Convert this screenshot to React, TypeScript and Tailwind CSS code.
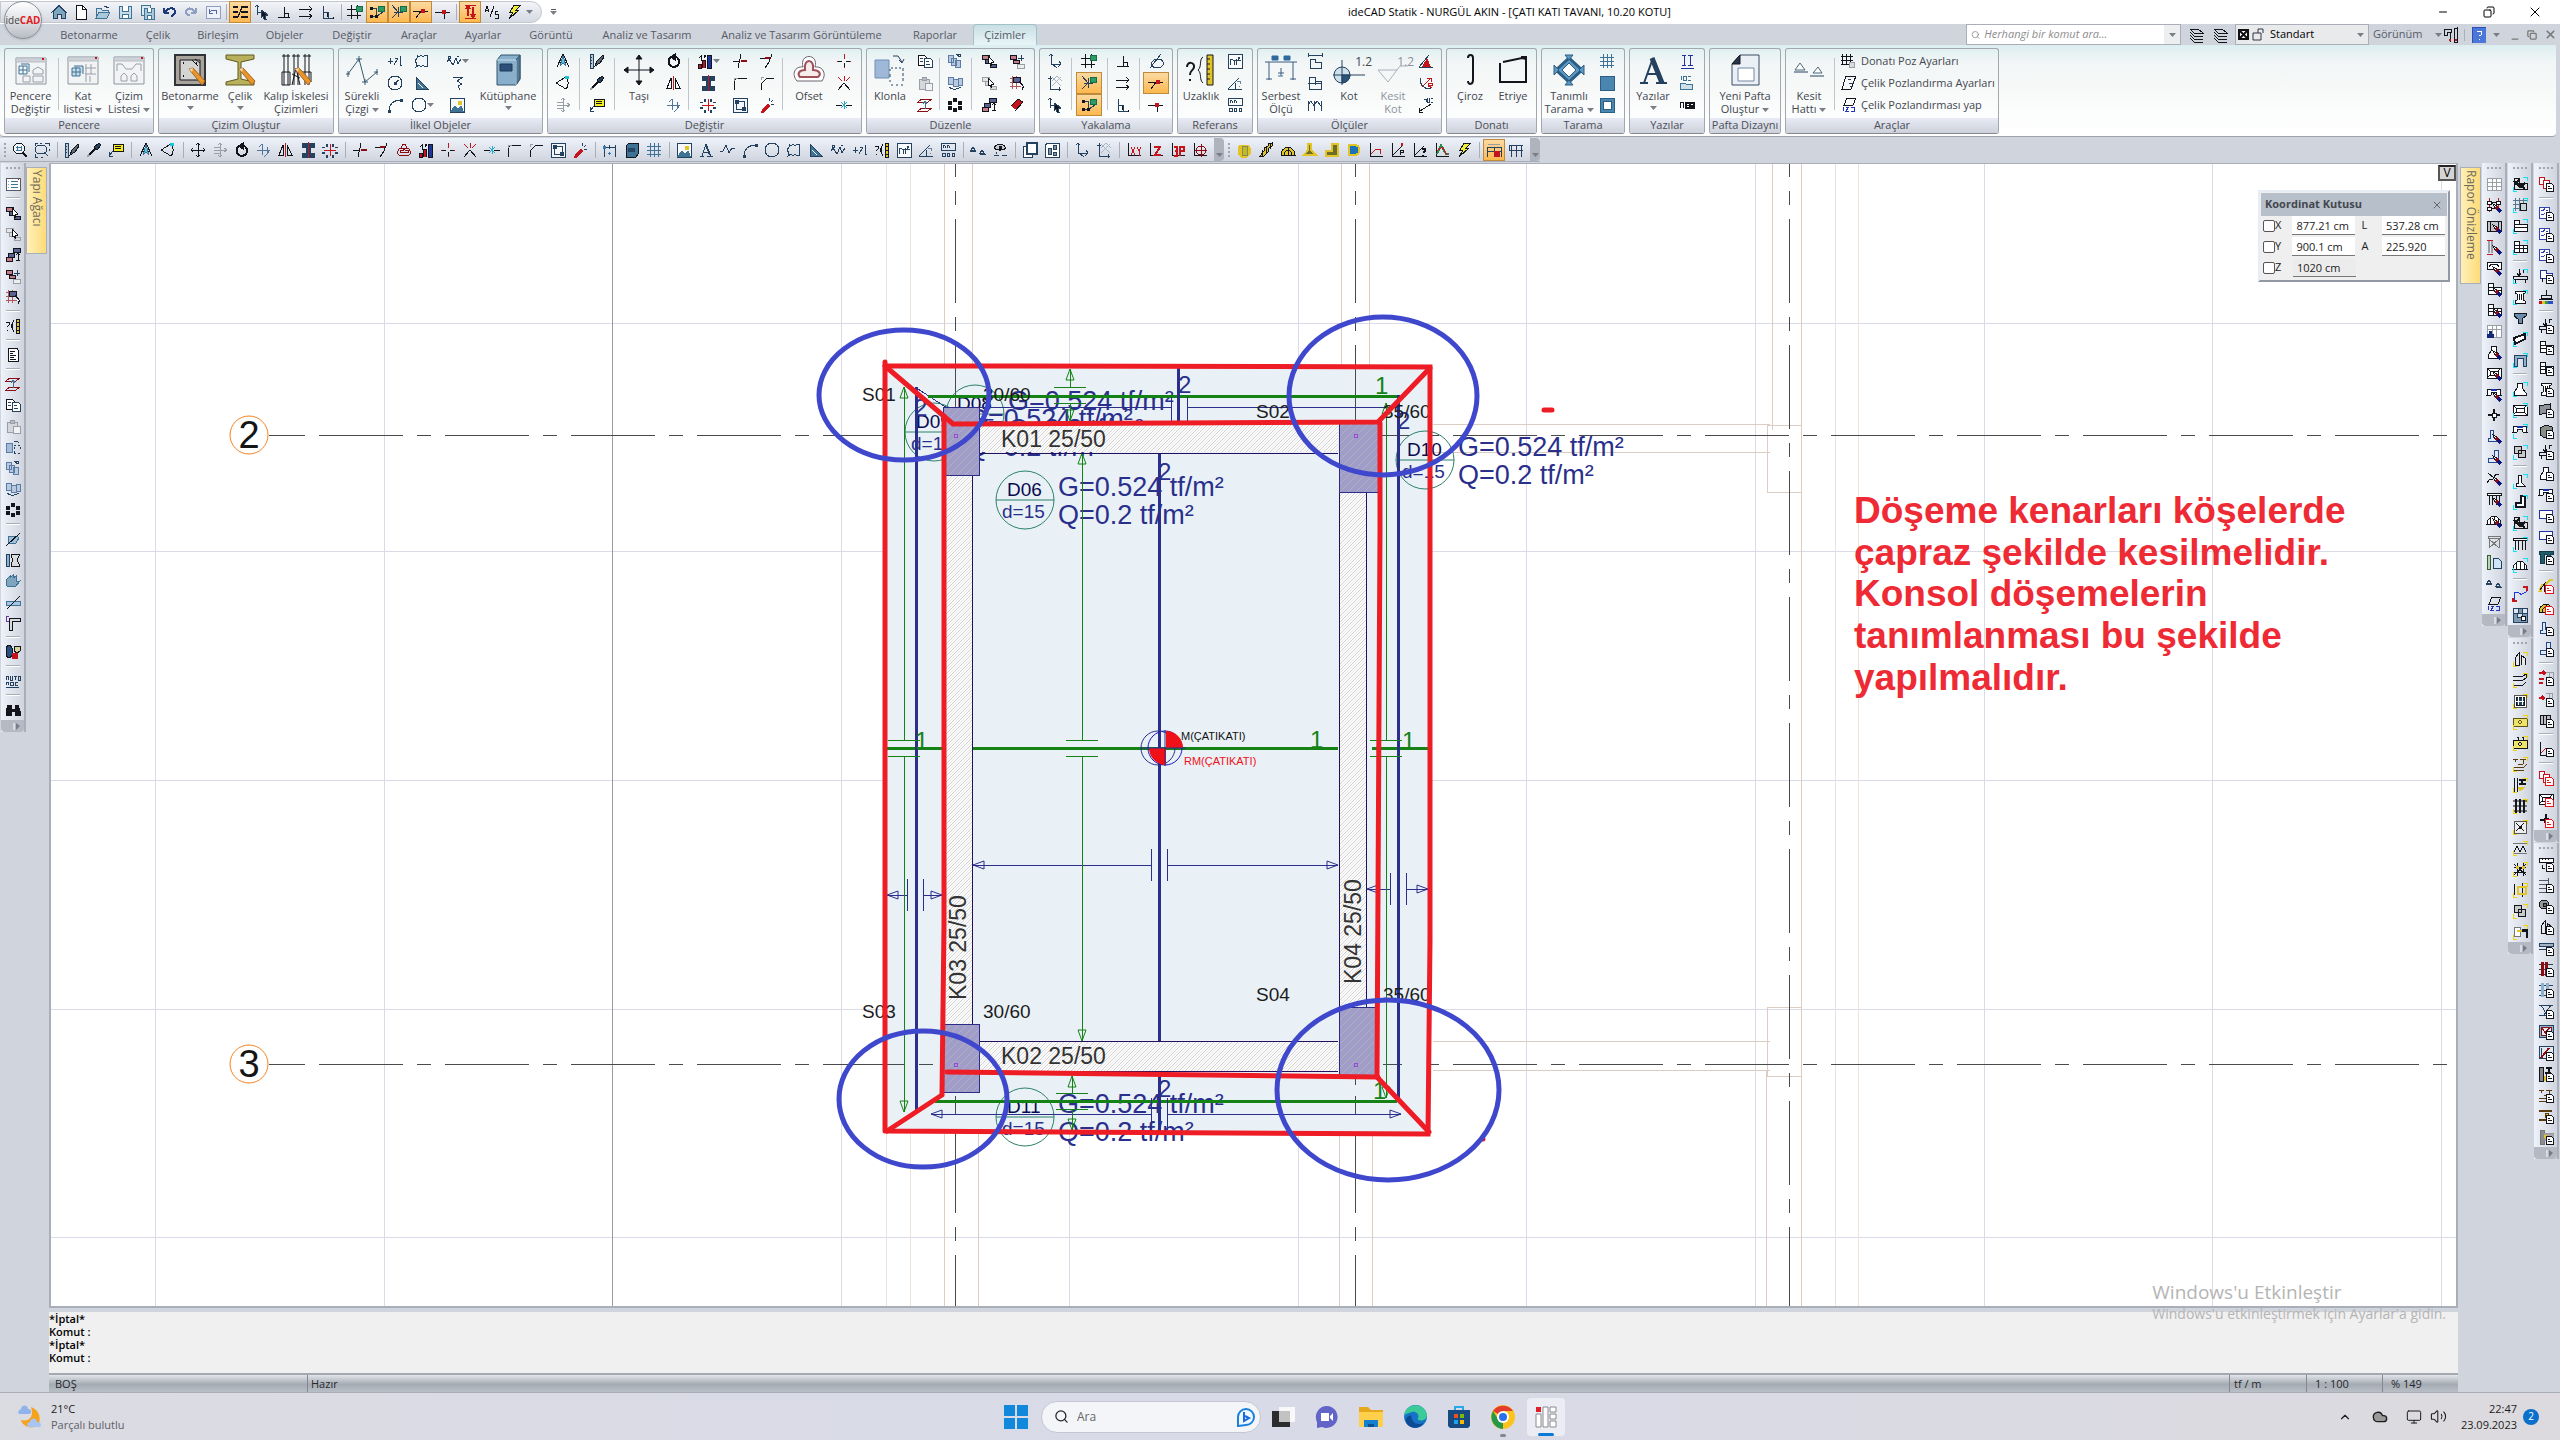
import React from 'react';
import { Search, ChevronUp, Cloud, Monitor, Volume2, Minus, Copy, X } from 'lucide-react';

// one layer of an icon: path, stroke, fill, stroke width
type Layer = [string, string, string?, number?];

const K = '#14141c';
const N = '#24425f';
const R = '#c4141c';
const G = '#9a9ea6';
const B = '#8fb0cc';
const T = '#3f7396';
const Y = '#e0c428';
const M = '#8c0c14';

const ICONS: Record<string, Layer[]> = {
  home: [['M2 8L8 2L14 8V14H10V10H6V14H2Z', N, '#7fa6c0'], ['M0 9L8 1L16 9', N]],
  page: [['M3 1H9L13 5V15H3Z', K, '#fff'], ['M9 1V5H13', K]],
  open: [['M1 14V4H6L7 6H13V8', T, '#cfe0ea'], ['M1 14L4 8H15L12 14Z', T, '#a9c8da'], ['M9 2L14 4', N]],
  save: [['M2 2H14V14H2Z', T, '#c8dce8'], ['M5 2V7H11V2M5 14V10H11V14', T, '#fff']],
  saveAll: [['M2 1H11V11H2Z', T, '#dce8f0'], ['M5 4H15V15H5Z', T, '#a9c8da'], ['M8 15V11H12V15M8 4V8H12V4', T, '#fff']],
  undo: [['M3 9V4M3 9H8M3 9L6 6C9 3 14 4 14 8C14 10 12 12 10 12', '#1d3a7a', undefined, 2]],
  redo: [['M13 9V4M13 9H8M13 9L10 6C7 3 3 5 3 8C3 10 5 11 7 11', '#8f9fc4', undefined, 2]],
  undoBox: [['M1 2H15V14H1Z', '#8f9fc4', '#eef1f8'], ['M4 9V5M4 9H8M4 9L7 6H11V10', '#5168a5']],
  layers: [['M1 3H6M1 8H6M1 13H6', K, undefined, 2], ['M9 3H16M9 8H16M9 13H16', K, undefined, 2], ['M6 13L10 3', K]],
  orthoFree: [['M3 1V11M1 3L3 1L5 3', N], ['M3 8H12', N], ['M7 6L14 11L11 12L12 15L10 15L9 12L7 14Z', N, K]],
  perp: [['M2 13H14M8 13V3M8 9H12V13', K]],
  parallel: [['M1 5H14M11 2L14 5L11 8M1 12H14M11 10L14 12L11 15', K]],
  corner: [['M3 2V14H14M3 8H8V14', N], ['M7 9V13M13 13V15', K]],
  gridLock: [['M0 5H14M0 11H14M4 1V15M10 1V15', K, undefined, 1], ['M9 2H15V7H9Z', '#146e46', '#2e9a66']],
  polyLock: [['M2 4H8L7 12H2M8 12L14 8', N], ['M1 3H3V5H1ZM1 11H3V13H1ZM6 11H8V13H6Z', K, K], ['M9 2H15V7H9Z', '#146e46', '#2e9a66']],
  snapLock: [['M1 1L7 8L1 14M7 3V13M3 8H12', N], ['M9 2H15V7H9Z', '#146e46', '#2e9a66']],
  snapNear: [['M0 7H15M3 14L8 7', K], ['M8 5H11V8H8Z', R, R]],
  snapMid: [['M0 8H15M9 8V15', K], ['M7 6H10V9H7Z', R, R]],
  updown: [['M3 1H14M3 14H14', R], ['M6 3V12M4 5L6 2L8 5M11 3V12M9 10L11 13L13 10', R, undefined, 2]],
  as: [['M1 8L3 2L5 8M2 6H4M6 13L10 2M14 7H11V10H14V14H11', K]],
  bolt: [['M8 1H15L10 6H13L3 15L7 8H4Z', K, '#f0ee30']],
  zoomWin: [['M7 1A5 5 0 1 0 7 12A5 5 0 1 0 7 1Z', K, '#f4f7fa'], ['M4 5H10M4 8H10M5 4V9M9 4V9', T], ['M11 11L15 15', K, undefined, 2]],
  zoomExt: [['M1 4V1H4M6 1H8M11 1H15V4M15 7V9M1 7V10M1 12V15H4M7 15H9', N], ['M7 4A4 4 0 1 0 7 11A4 4 0 1 0 7 4ZM10 10L14 14', N]],
  ruler: [['M1 1H4V15H1ZM1 4H3M1 7H3M1 10H3', N, '#bccbd8'], ['M14 2L8 8L6 13L11 10L15 4Z', K, '#5c6b7a']],
  brush: [['M13 1L15 3L11 8L8 5Z', K, N], ['M9 7L2 14', K, undefined, 2], ['M1 15L3 13', G, undefined, 2]],
  tag: [['M5 2H15V9H5Z', K, '#f4ee22'], ['M7 4H13M7 6H13', K], ['M5 9L2 13M1 10V14H5', N]],
  compass: [['M8 1L2 14M8 1L14 14M4 9H12', K], ['M8 3L5 13L8 10L11 13Z', T, '#56c6dc']],
  cone: [['M1 8L11 2C14 5 14 11 11 14Z', K], ['M10 1H13V3H10Z', '#18c6dc', '#18c6dc']],
  move: [['M8 1V15M1 8H15M6 3L8 1L10 3M6 13L8 15L10 13M3 6L1 8L3 10M13 6L15 8L13 10', K]],
  moveGrey: [['M8 2V14M2 8H15M2 5H9M2 11H9M12 6L15 8L12 10M6 3L8 1L10 3M6 13L8 15L10 13', G]],
  rotate: [['M5 4C2 6 2 11 5 13C8 15 13 13 13 9C13 6 11 4 9 4', K, undefined, 2], ['M9 1V7L5 4Z', K, K]],
  rotCopy: [['M6 2V13M1 8H14M6 2L3 5M11 5V12L8 15M14 8L11 12', '#54759a']],
  mirror: [['M7 1V15', R], ['M5 3V13H1ZM9 3V13H14Z', K]],
  align: [['M2 1H14V5H2ZM2 11H14V15H2Z', N, N], ['M6 5H10V11H6Z', N, N], ['M8 0V16', R, undefined, 1]],
  array: [['M8 2V14M2 8H14', R], ['M4 3H6M10 3H12M1 6V5M14 6V5M1 10V12M14 10V12M4 14H6M10 14H12', N, undefined, 3]],
  trim: [['M1 8H7M9 1L6 15', K], ['M9 8H15', M, undefined, 2]],
  extend: [['M1 5H6M13 1L10 9L6 15', K], ['M6 5H11', M, undefined, 2]],
  offset: [['M6 6C5 1 11 1 10 6C15 6 15 12 13 13H3C1 12 1 6 6 6Z', M], ['M7 8C7 5 9 5 9 8H12V10H4V8Z', M]],
  stairs: [['M1 15V11H4V15ZM5 15V7H8V15', K, R], ['M10 15V2H14V15Z', K, '#20359c'], ['M2 5L4 3V8M7 2H9L7 5', K]],
  burst: [['M8 1V6M8 10V15M1 8H5M11 8H15', R], ['M2 8H6M10 8H14M8 10V14', K]],
  burstX: [['M2 15L8 8L14 15', K], ['M2 2L6 6M14 2L10 6M8 1V6', R]],
  join: [['M0 8H6M10 8H16', K], ['M5 5L11 11M11 5L5 11M8 4V12', '#26a8c8']],
  fillet: [['M2 15V8C2 4 5 3 9 3H15', K], ['M2 3V6M2 3H6', G]],
  chamfer: [['M2 15V9L8 3H15', K], ['M2 2V5M2 2H5', G]],
  stretch: [['M1 1H15V15H1Z', N, '#f2f6fa'], ['M3 3H6V6H3ZM10 10H13V13H10Z', N, N], ['M6 4H12V10M4 6V12H10', N]],
  explode: [['M2 15L9 7L11 9L4 16Z', R, R], ['M10 1L11 4M14 3L12 5M15 7L12 7', N]],
  dims: [['M2 3V15M13 3V15M2 5H13M7 3V7', N], ['M1 4H3V6H1ZM6 11H9M7 10V13', '#3a78b0', '#3a78b0']],
  book: [['M2 4L5 1H14V12L12 15H2Z', K, T], ['M4 6H10V9H4Z', N, '#26486e']],
  hash: [['M4 1V15M8 1V15M12 1V15M1 4H15M1 8H15M1 12H15', T, undefined, 1]],
  image: [['M1 1H15V15H1Z', N, '#f6f8fa'], ['M2 14L6 9L9 12L12 9L14 14Z', T, T], ['M9 4H12V7H9Z', Y, Y]],
  letterA: [['M2 14H6M9 14H15M4 14L8 2L13 14M6 10H11', N, undefined, 1], ['M8 3L12 13', N, undefined, 2]],
  poly: [['M0 9H3L6 3L9 11L12 6L15 7', N]],
  arc: [['M2 14C2 7 7 3 14 3', N], ['M1 13H3V15H1ZM13 2H15V4H13Z', N, N]],
  circle: [['M8 1A7 7 0 1 0 8 15A7 7 0 1 0 8 1Z', N]],
  circleR: [['M8 1A7 7 0 1 0 8 15A7 7 0 1 0 8 1ZM8 8L12 5', N], ['M7 7H9V9H7Z', N, N]],
  cloudRect: [['M3 2L5 4L7 2L9 4L11 2L14 3L13 6L14 8L13 11L14 13L11 14L9 12L7 14L5 12L2 14L3 11L1 8L3 5Z', N]],
  hatchTri: [['M2 2L14 14H2Z', N, T], ['M4 8L9 13', '#fff']],
  spline: [['M1 9L3 6L5 9L7 12L10 5L12 11L15 6', N], ['M2 3H4V5H2ZM11 3H13', N]],
  level: [['M1 8H6M3 5V11M7 12L11 5H8M13 3V12H15', N]],
  query: [['M1 4H4V7L2 9M2 12V13', K], ['M9 2L6 8L9 14M7 5V11', K], ['M11 1H14V15H11Z', K, Y], ['M11 4H14M11 8H14M11 12H14', K]],
  area: [['M1 1H15V15H1Z', N, '#f8fafc'], ['M3 12V7L5 6L7 8V12M7 8L9 7V12M11 4H13L11 7H14', N]],
  angle: [['M1 14L12 3M1 14H15M8 14V8', N], ['M10 6H13V9M12 11V12', '#6b82a0']],
  mm: [['M1 1H15V8H1ZM3 6V3L5 4V6M7 6V3L9 4V6', N], ['M2 11H5V14H2ZM7 11H9V14H7ZM12 11H14V14H12Z', N]],
  kot: [['M0 9H6M10 12H16M1 8L3 5L5 8ZM10 11L12 8L14 11Z', N]],
  eye: [['M2 6C5 1 11 1 14 6C11 9 5 9 2 6Z', K, '#c8ccd2'], ['M7 4H9V7H7Z', K, K], ['M2 13H7M10 13H15M4 10V12', N]],
  pages: [['M1 4H10V15H1Z', N, '#fff'], ['M5 1H15V12H5Z', N, '#fff', 2]],
  sheet: [['M3 1H15V15H1V4Z', N, '#fff'], ['M4 6H7V12H4ZM9 3H12V7H9ZM9 10H12V13H9Z', N, '#8093a8']],
  axes: [['M4 1V11H14M2 3L4 1L6 3M12 8L14 11L11 14M5 11L10 15', N]],
  axesGrid: [['M3 1V14H14', N], ['M5 2L14 11M10 1L15 6M14 2L5 11M5 6L10 1', '#a9b4c4'], ['M1 3H5M12 12V16', N]],
  xy: [['M2 1V13H15', K], ['M5 5L9 13M9 5L5 13M11 5L13 9L15 5M13 9V14', R, undefined, 1]],
  zed: [['M2 1V13H15', K], ['M6 5H12L7 13H13', R, undefined, 2]],
  p3: [['M2 1V13H15', K], ['M4 5H7V14H4M5 9H7M10 14V5H14V9H10', R, undefined, 2]],
  target: [['M2 1V13H15', K], ['M9 4A4 4 0 1 0 9 13A4 4 0 1 0 9 4ZM9 2V15M3 8H15', M]],
  slab: [['M4 3H12L14 6V12L11 15H5L2 12V5Z', Y, Y], ['M6 4H11V13H6Z', '#8c8a50', '#bdbb2a']],
  stair: [['M2 14L6 9V6L10 4V2L14 1V4L10 7V10L6 14Z', K, Y], ['M4 8V14M8 5V11M12 2V7', K]],
  dome: [['M1 13C1 3 15 3 15 13Z', K, Y], ['M4 13C5 7 11 7 12 13M8 6V13', K]],
  found: [['M6 2H9V8L14 13H2L6 8Z', Y, '#6d6c28', 2]],
  ell: [['M8 2H14V14H2V9H8Z', Y, '#6d6c28', 2]],
  dshape: [['M3 3H9C15 4 15 12 9 13H3Z', Y, '#1e72b8', 2]],
  chart: [['M2 1V14H15', K], ['M3 12L8 7H12V12', R]],
  chartP: [['M2 1V14H15M3 13L12 4', K], ['M12 1V4', R, undefined, 2], ['M10 13V8H13V10H10', K]],
  chartQ: [['M2 1V14H15M3 13L12 4', K], ['M10 7H13V9L11 11M11 13V14', K, undefined, 2]],
  chartG: [['M2 1V14H15', K], ['M3 12L7 3L12 12H15', '#2a8850', undefined, 2], ['M3 9L8 5L13 13', R]],
  frameRed: [['M1 15V5H15V15M1 9H15M8 5V9', N], ['M2 2H14', G], ['M8 9H13V14H8Z', R, R]],
  frame: [['M1 3H15M3 3V15M1 8H15M8 3V15M13 3V15M1 3V8', N]],
  pick: [['M1 2H8V6H1Z', K, '#c47c86'], ['M4 6H9V10H4ZM9 11H15V14H9Z', K, '#5a6494'], ['M7 3L13 9L10 10L11 13L9 10L7 11Z', K, '#fff']],
  pickG: [['M1 2H8V6H1Z', G, '#e6e6e8'], ['M4 6H9V10H4ZM9 11H15V14H9Z', G, '#ddd'], ['M7 3L13 9L10 10L11 13L9 10L7 11Z', K, '#fff']],
  pickUp: [['M8 1H15V5H8Z', K, '#5a6494'], ['M1 10H7V14H1Z', K, '#c47c86'], ['M3 6H9V10H3Z', K, '#5a6494'], ['M13 6V14M11 8L13 6L15 8M11 13H15', K]],
  pickPlus: [['M1 2H7V6H1ZM4 7H10V10H4Z', K, '#c47c86'], ['M8 11H15V15H8Z', G, '#eee'], ['M12 2V8M9 5H15', N]],
  pickGrid: [['M1 3H12M1 7H12M1 11H12M3 1V14M7 1V14', '#b0585c'], ['M4 2H11V7H4Z', K, '#5a6494'], ['M10 6L15 12L13 13L14 15', K, '#fff']],
  list: [['M1 2H15V14H1Z', '#555a66', '#fff'], ['M6 5H13M6 8H13M6 11H13', T], ['M3 5H4M3 8H4M3 11H4', B], ['M13 3H14', R]],
  note: [['M3 1H12L13 3V14H3Z', K, '#fff', 1], ['M5 4H10M5 6H8M5 8H11M5 10H9M5 12H11', K]],
  levels: [['M5 2H15L11 5H1ZM5 11H15L11 14H1Z', M], ['M8 12V4M6 7L8 4L10 7', T]],
  copy: [['M1 2H7L9 4V12H1Z', K, '#fff'], ['M7 5H13L15 7V14H7Z', N, '#fff'], ['M3 5H6M3 8H6M9 8H12M9 11H13', N]],
  paste: [['M2 4H12V14H2Z', G, '#d4d8dc'], ['M5 2H9V5H5Z', G, '#b8bcc2'], ['M8 8H15V15H8Z', G, '#f2f2f4']],
  clone: [['M1 4H7V13H1Z', '#5c7ca8', '#a7bcd8'], ['M9 6H11M13 6H15M9 8V10M15 8V10M9 12V14H11M13 14H15', N], ['M9 2H12L14 4', N]],
  clone2: [['M1 2H6V9H1ZM4 5H9V12H4ZM8 7H13V14H8Z', '#5c7ca8', '#b9c9de'], ['M9 1L13 4M11 1H13V4', N]],
  clone3: [['M1 2H6V9H1ZM6 4H11V11H6ZM11 3H15V10H11Z', '#5c7ca8', '#b9c9de'], ['M2 12C5 15 10 15 14 12', N]],
  ring: [['M7 2H9V4H7ZM12 5H14V7H12ZM12 10H14V12H12ZM7 12H9V14H7ZM2 10H4V12H2ZM2 5H4V7H2Z', K, '#8a8a94', 2]],
  cut: [['M3 5H12L14 7L11 12H3Z', T, '#9fc0d8'], ['M1 15L15 2', K]],
  cut2: [['M1 2H4V14H1Z', N, B], ['M6 2H14V4L12 8L14 12V14H6V12L8 8L6 4Z', K, '#d9dcda']],
  roof: [['M1 7L5 3V5L8 2V5L11 3V9L15 8L10 14L2 13Z', T, '#7ea5bd']],
  cut3: [['M1 7H15V11H1Z', T, '#a7c4e0'], ['M2 15L15 2', K]],
  pipe: [['M4 3H15V6H7V15H4Z', K, '#d9d9d9'], ['M4 1A3 3 0 1 0 4 7', '#6a3a9a']],
  shapes: [['M1 4C1 1 7 1 7 4V11C7 14 1 14 1 11Z', K, '#275080'], ['M9 2H15V7L12 9L9 7Z', K, '#d8d49a'], ['M7 9H12V14H7Z', R, R]],
  auto: [['M1 7V3H3V7M5 3V7H7V3M9 3H12M10 3V7M13 3H15V7H13Z', N], ['M1 12V9H3V12M5 12V9H8V12ZM13 9H10V12H13M1 14H14', N]],
  bino: [['M3 3H6V7H10V3H13L15 9V13H10V9H6V13H1V9Z', K, K]],
  tangent: [['M2 15L13 1M9 7A4 4 0 1 0 10 14A4 4 0 1 0 9 7Z', N]],
  pen: [['M1 10L9 2L14 5L6 14Z', K, R], ['M1 10L6 14', '#fff', undefined, 3]],
  zig: [['M4 2H14L8 6L13 9L9 11L11 15', N]],
  dimShape: [['M1 2H15M1 0V4M15 0V4M3 15V6H8V9H14V15Z', N]],
  dimShape2: [['M2 2H8V6H14V14H2Z', N], ['M1 8H15M8 6V10', N]],
  dimWave: [['M1 4V14M7 4V14M14 4V14M1 8L4 4L7 9L10 4L14 9', N]],
  redAngle: [['M1 14H15M1 14L11 2', N], ['M5 13L9 6L12 13Z', R, R]],
  redR: [['M2 3C2 11 7 14 13 14', N], ['M4 12L12 4M9 3H13V7M10 12V8H14V10H10L14 13', R]],
  abcLine: [['M2 14L13 7M1 11V15H5', K], ['M6 2H8V5M9 1V5H11V1M13 1H15M13 5H15', N]],
  fill2: [['M1 1H15V15H1Z', '#2c5d82', '#4b86b0']],
  fillRing: [['M1 1H15V15H1Z', '#2c5d82', '#4b86b0'], ['M4 4H12V12H4Z', '#2c5d82', '#fff']],
  cols: [['M3 2H7M9 2H14M5 2V12M11 2V12M3 12H7M9 12H14M2 15H15', '#2233a0']],
  abcOpen: [['M2 1V5M4 1V5H7V1H4M9 1H12M9 5H12', T], ['M1 14V8H6L7 9H13V14Z', T, '#cfe0ea']],
  abcInv: [['M1 11V5H4V11M6 5H15V11H6Z', K], ['M6 5H15V11H6Z', K, K], ['M8 7H10M12 7H14M8 9H10', '#fff']],
  cog: [['M1 1V12M5 1V12M9 1V9M0 3H12M0 7H12M0 11H8', K], ['M11 9A3 3 0 1 0 11 15A3 3 0 1 0 11 9Z', G, '#ddd']],
  poz: [['M5 1H15L10 14H1Z', K], ['M7 4H10M8 8H13M9 11H12', N]],
  poz2: [['M6 1H15L12 8H3Z', K], ['M2 10V14M5 10H8L5 14H8M10 10H13V14H10', '#2233c0']],
  layerA: [['M2 2H10L15 6H6ZM2 5L6 9H15M2 8L6 12H15M2 11L6 15H15', K]],
  wrench: [['M1 2H8V5H4V8H1ZM7 5V15M11 2L14 1V15H11Z', K], ['M6 13H8M12 13H14', R, undefined, 2]],
  help: [['M2 0H16V16H2Z', '#2c50b8', '#4b78d8'], ['M7 4H11V8L9 9M9 12V13', '#fff', undefined, 1]],
  box: [['M1 2H15V14H1ZM1 6H15M6 2V14M10 2V14M1 10H15', G, '#fff']],
  nodes: [['M3 1V15M12 1V15', R], ['M1 4H5V7H1ZM10 4H14V7H10ZM1 10H5V13H1ZM5 5H10M5 11H9', K, '#fff']],
  wallP: [['M1 3H15V13H1Z', K, '#c4c6ca'], ['M4 3V13M12 3V13', K]],
  colRed: [['M1 1H7M1 15H7', R], ['M3 2V14M6 2V14', G, undefined, 2]],
  beamP: [['M1 2H15V9H1ZM3 7L5 4H11L13 7', K, '#fff']],
  blockL: [['M2 2H7V6H15V13H2ZM2 6H7M2 9H15', K, '#fff']],
  blockG: [['M2 2H7V6H15V13H2ZM2 6H7M2 9H15M7 6V13M11 6V13', K, '#fff']],
  tableN: [['M1 2H15V14H1ZM1 6H15M6 2V14M10 2V14', G, '#fff'], ['M3 8H5V11H7V14H1V11H3Z', '#122a78', '#122a78']],
  pad: [['M5 2H10V7L14 12V14H2V12L5 7Z', K, '#fff']],
  padTop: [['M1 3H15V13H1ZM4 6H12V10H4ZM1 3L4 6M15 3L12 6M1 13L4 10M15 13L12 10', K, '#fff']],
  pads: [['M2 3H14L15 9H11L10 6H6L5 9H1Z', K, '#fff'], ['M5 4H11', '#1a30b0', undefined, 2]],
  plus: [['M8 2V14M2 8H14', K, undefined, 2], ['M6 6H10V10H6Z', K, '#fff']],
  wallR: [['M4 2H7V9L12 13H2V10H4Z', '#23498c', '#dfe8f4']],
  wallK: [['M6 2H9V9L13 13H4V10H6Z', K, '#fff']],
  wallL: [['M8 1H12V13H2V9H8Z', '#23498c', '#dfe8f4']],
  ellK: [['M9 2H13V13H4V9H9Z', K, '#fff', 2]],
  stairs2: [['M1 13L4 9H7L10 4H13M2 3L14 13', K]],
  pile: [['M1 2H15V4H1ZM3 4V14M6 4V14M10 4V14M13 4V14', K, '#fff']],
  arch: [['M1 12C2 2 14 2 15 12ZM4 12V6M8 12V4M12 12V6', K, '#fff']],
  truss: [['M2 3H14V5H2ZM3 5V15M13 5V15M3 6L13 15M13 6L3 15', '#777']],
  doc2: [['M1 1H4V15H1Z', '#3c5c3c', '#b8d8b4'], ['M7 4H12L15 7V14H7Z', N, '#cfe6fa']],
  hatchB: [['M2 2H7V7H15V13H2Z', K, '#ddd'], ['M2 5L9 12M7 7L13 13M2 9L7 4M8 12L13 7', K, undefined, 2]],
  calc: [['M3 1V14M7 1V14M11 1V14M1 3H15M1 7H15M1 11H15', '#5a7488'], ['M8 6H14V13H8Z', K, '#c8d4dc']],
  load: [['M1 8H15V11H1ZM3 11V15M13 11V15M7 1V8M5 5L7 8L9 5M11 1H14M11 1V5', K]],
  col: [['M3 2H13V4L11 5V11L13 12V14H3V12L5 11V5L3 4Z', K, '#fff'], ['M7 5V11M9 5V11', K]],
  cap: [['M2 3H14V6L10 9V13H6V9L2 6Z', K, '#6d8bac']],
  plank: [['M2 7L13 3V8L3 13Z', K, '#fff', 2]],
  portal: [['M2 3H14V14H11V6H5V14H2Z', N, '#8fb0cc', 1]],
  rail: [['M1 3H15V6H1ZM1 9H15', N, '#a8b4c0']],
  curve: [['M2 14V6H6C8 9 10 9 14 6V2', '#2233e0'], ['M1 12V15H5M11 1H15V5', R, undefined, 2]],
  checks: [['M1 1H15V15H1Z', N, '#7e99b0'], ['M1 1H6V6H1ZM10 1H15V6H10ZM5 6H10V10H5Z', N, '#dfe6ee'], ['M9 9H13V13H9Z', K, '#fff']],
  docs: [['M1 1H6V8H1Z', R, '#fff'], ['M5 4H11V12H5Z', R, '#fff']],
  task: [['M1 2H11V13H1Z', '#3344b0', '#fff'], ['M3 5L5 6L7 3M3 9L5 10L7 8M8 5H10', '#3344b0']],
  wallO: [['M2 2H8V5H14V10H2Z', '#2233a0', '#fff'], ['M4 10V14', K]],
  spectrum: [['M3 6H13V9H3ZM8 1V6M1 10H15', K], ['M1 13H4', R, undefined, 3], ['M4 13H7', Y, undefined, 3], ['M7 13H10', '#2a9a50', undefined, 3], ['M10 13H15', '#2a50c0', undefined, 3]],
  tube: [['M1 4L12 2V10L4 12H1Z', K, '#8d9298']],
  cube: [['M2 5L8 2L14 4V12L7 15L2 12Z', K, '#888d88']],
  rect: [['M1 3H14V11H1Z', '#2233a0', '#fff']],
  portalT: [['M1 2H15V5H12V14H9V5H6V14H2V5H1Z', '#0f3c48', '#215a68']],
  yWall: [['M1 14L4 7H7L12 2H15M3 14V8M7 12V6', Y, undefined, 2], ['M2 12L8 4M6 14V6', K]],
  redArr: [['M1 3H7M5 1L7 3L5 5M1 9H6M1 13H5', R, undefined, 2], ['M8 2H15V10M11 2V8', G]],
  redOne: [['M1 7H6M4 5L6 7L4 9', R, undefined, 2], ['M8 2H14V8M11 2V8', G]],
  bars: [['M2 12V3H12V12Z', K, '#bcbcc0'], ['M5 3V12M8 3V12', K]],
  steelA: [['M3 14V7L7 2V14ZM9 14V4L13 7V14', K, '#e8e8e8']],
  steelB: [['M1 4H11L14 2M1 8H11L14 6V2M1 13H11L14 10', K]],
  steelC: [['M2 2H14V14H2Z', '#555', '#fff'], ['M4 4H12V12H4Z', K, N], ['M6 4V12M10 4V12M4 8H12', '#fff']],
  steelD: [['M1 4H15V12H1ZM6 8L8 6L10 8L8 10Z', '#5c5418', '#f0e468']],
  steelE: [['M1 5H15V13H1ZM5 2H7M10 2H12M6 2V5M11 2V5M6 9L8 7L10 9L8 11Z', K, '#f0e468']],
  steelF: [['M1 3H6M8 3H14M3 3V6M11 3V8L6 9M1 11H12L15 8M1 14H12', '#5a3c10']],
  steelG: [['M2 1V15M5 1V15', K], ['M7 3H14M10 3V7M7 7H14', K, undefined, 2], ['M6 10H13L8 14Z', Y, Y]],
  steelH: [['M1 3H15M1 8H15M1 13H15', '#777', undefined, 2], ['M4 1V15M8 1V15M12 1V15', K, undefined, 2]],
  steelI: [['M2 2H14V14H2Z', '#555', '#eee'], ['M4 4L12 12M12 4L4 12M7 7H9V9H7Z', K]],
  steelJ: [['M1 3H15M1 13H15', '#777'], ['M2 12L5 6L8 12L11 6L14 12', K]],
  steelK: [['M2 6H14M2 11H14M5 2V15M11 2V15M2 3L14 14M14 3L2 14', K], ['M4 5H6V7H4ZM10 5H12V7H10Z', Y, Y]],
  steelL: [['M2 2V13M10 1V15', K], ['M6 5H14V12H6Z', Y, undefined, 2]],
  steelM: [['M2 2H9V9H2ZM6 6H13V13H6Z', K, '#c8ccc8']],
  steelN: [['M2 3H8V12H2Z', '#777', '#fff'], ['M5 7H10', Y, undefined, 2], ['M10 6H15V14', K, undefined, 3]],
  scale: [['M1 2H15V6H1ZM4 2V4M7 2V4M10 2V4M4 9V12H7', K, '#fff']],
  linesH: [['M1 3H10M1 7H10M1 11H10M1 15H8M10 1V12', '#555a6a']],
  bolt2: [['M6 2A4 4 0 1 0 6 11A4 4 0 1 0 6 2Z', K, '#989898'], ['M5 5H8V8H5Z', K, '#666']],
  redHash: [['M1 3H15M1 8H15M1 13H12', N], ['M4 1V15M8 1V15', M, undefined, 3]],
  blueHash: [['M1 3H15M1 8H15M1 13H12', N], ['M4 1V15M9 1V15', B, undefined, 3]],
  bowtie: [['M1 2H15M1 12H9M3 2L9 12M13 2L6 12', N]],
  frameB: [['M1 1H15V13H1Z', N, '#8db4cc'], ['M3 3H13V11H3ZM3 3L9 11M13 3L6 9', M, '#e4eef4']],
  frameR: [['M1 1H15V13H1ZM3 3V14', N, '#dfe8ee'], ['M3 13L11 3', M, undefined, 2]],
  steelO: [['M1 1H5V15H1Z', K, '#888'], ['M8 2H14M11 2V7M7 7H13', K, undefined, 2], ['M6 10H9V14H6Z', Y, Y]],
  steelP: [['M1 3H14M1 12H12', '#5a3c10', undefined, 2], ['M7 5H10V9H7Z', '#5a3c10', Y]],
  greyBox: [['M2 1H6V15H2Z', '#777', '#8d8d8d'], ['M6 4H15V11H6Z', '#999', '#a8a8a8'], ['M6 6H8V8H6Z', Y, Y]],
};

const BIG: Record<string, Layer[]> = {
  winSwap: [['M1 4H31V30H1Z', '#8e949c', '#f2f3f5'], ['M1 4H31V8H1Z', '#b8bec6', '#cdd2d8'], ['M27 5H29', R, undefined, 2], ['M4 12H12V20H4ZM6 10H14V18M4 16H12M8 12V20', T], ['M18 16L23 13L28 16V20H18ZM8 22H15V28H8ZM18 22H28V28H18Z', G]],
  kat: [['M1 3H31V30H1Z', '#8e949c', '#f2f3f5'], ['M1 3H31V7H1Z', '#b8bec6', '#cdd2d8'], ['M28 4H30', R, undefined, 2], ['M5 14H13V22H5ZM7 12H16V20M5 18H14M9 13V22', T, '#c8dce8'], ['M19 10V28M24 10V20M18 14H29M18 20H29M23 22V28', G]],
  cizim: [['M1 3H31V30H1Z', '#8e949c', '#f2f3f5'], ['M1 3H31V7H1Z', '#b8bec6', '#cdd2d8'], ['M28 4H30', R, undefined, 2], ['M4 17V10H9L13 15H19L23 10H28V17', G], ['M8 22L11 19L14 22V27H8ZM18 22L21 19L24 22V27H18Z', G]],
  beton: [['M1 1H31V31H1Z', '#303438', '#a8a49c', 2], ['M6 6H26V26H6Z', K, '#d4d4d0'], ['M9 9H10M22 9H23M9 22H10', K, undefined, 2], ['M18 6L24 12M21 5L26 9', K]],
  celik: [['M2 1H30V5L17 8V25L30 28V31H2V28L14 25V8L2 5Z', '#5e5a1c', '#b8b05c']],
  kalip: [['M4 0V31M8 0V31M14 0V31M18 0V31M25 0V31M29 0V31M2 2H10M12 2H20M23 2H31', K], ['M2 18H10V31H2ZM22 18H31V28', K], ['M12 31L16 14L20 31M12 20L20 24', K]],
  zigzag: [['M2 20L13 5L19 28L31 18', '#3a5a70'], ['M10 5H16M13 2V8M16 28H22M19 25V31M0 20H4M2 17V23M28 18H32M31 15V21', '#3a5a70']],
  kutup: [['M5 6L9 1H28V25L24 31H5Z', '#34526a', '#88b0cc'], ['M24 6L28 1V25L24 31Z', '#34526a', '#4f7a98'], ['M8 10H20V17H8Z', '#1d3a58', '#2c5078'], ['M5 6H24V31', '#c8dcea']],
  tasi: [['M16 1V31M1 16H31', K, undefined, 1], ['M13 5L16 1L19 5ZM13 27L16 31L19 27ZM5 13L1 16L5 19ZM27 13L31 16L27 19Z', K, K]],
  ofset: [['M10 13C6 -1 26 -1 22 13C30 12 34 20 29 27H4C-2 20 2 12 10 13Z', '#6c6470', '#fff'], ['M12 16C10 4 22 4 20 16C26 16 29 20 25 23H7C4 20 6 16 12 16Z', '#a05058', '#f7ecec', 2]],
  klonla: [['M1 6H15V24H1Z', '#6f8fb8', '#9fb8d8'], ['M17 14H19M21 14H23M25 14H27M29 14V17M29 19V22M29 24V27M29 31H27M24 31H22M19 31H17M16 28V26M16 23V20M16 17V15', N], ['M19 2H24L28 8M25 6L28 9L30 5', N]],
  uzaklik: [['M2 13C2 7 10 8 9 13C9 16 5 16 5 21M5 25V27', K, undefined, 2], ['M18 3C14 5 17 13 13 16C17 19 14 26 18 29', K], ['M22 1H28V31H22Z', K, Y], ['M22 5H25M22 10H25M22 15H25M22 20H25M22 25H25', K]],
  serbest: [['M4 8V26M16 14V22M28 8V26M0 8H32', '#3a5a80'], ['M7 2H13V6H7ZM19 2H25V6H19Z', '#2e6a9c', '#2e6a9c'], ['M1 25H7M25 25H31M13 19H19', '#3a5a80'], ['M13 22H18', T]],
  kot2: [['M9 13A8 8 0 1 0 9 29A8 8 0 1 0 9 13Z', N, '#cfe0ec'], ['M9 21H17A8 8 0 0 1 9 29Z', N, '#2a5478'], ['M0 21H32M9 6V31', N]],
  kesitKot: [['M1 16H20L11 28ZM20 16L23 12H31', '#a8b0ba']],
  ciroz: [['M14 4C14 0 19 0 19 4V26C19 31 14 31 14 27', K, undefined, 2]],
  etriye: [['M3 9V28H29V5L25 4L6 8', K, undefined, 2], ['M24 3H29V12', K, undefined, 2]],
  tarama: [['M3 16L16 4L29 16L16 28Z', '#2c5d82', '#5c98c4', 3], ['M9 16L16 9L23 16L16 23Z', '#2c5d82', '#fff'], ['M12 1H20L16 6ZM12 31H20L16 26ZM1 11V21L6 16ZM31 11V21L26 16Z', '#2c5d82', '#5c98c4']],
  yazi: [['M3 29H11M19 29H30M7 29L16 4M10 20H21', N, undefined, 2], ['M15 4L25 29', N, undefined, 5]],
  pafta: [['M11 1H30V31H3V10Z', '#3a4c60', '#eaf0f6'], ['M11 1V10H3Z', K, '#24364a'], ['M9 14H25V27H9Z', '#7288a0', '#fff']],
  kesitH: [['M1 18H15M17 22H31', N], ['M2 16L7 9L12 16ZM20 19L25 13L29 19Z', '#4b6878', '#fff']],
};

type IcoProps = { name: string; big?: boolean; deco?: string };

const Ico: React.FC<IcoProps> = ({ name, big, deco }) => {
  const size = big ? 32 : 16;
  const layers = (big ? BIG[name] : ICONS[name]) ?? [];
  return (
    <svg
      width={size}
      height={size}
      viewBox={`0 0 ${size} ${size}`}
      shapeRendering={big ? 'auto' : 'crispEdges'}
      className="shrink-0"
      aria-hidden="true"
    >
      {layers.map(([d, stroke, fill, width], i) => (
        <path key={i} d={d} stroke={stroke} fill={fill ?? 'none'} strokeWidth={width ?? 1} />
      ))}
      {deco === 'cyan' && <path d="M1 11V15H5M11 1H15V5" stroke="#18e0f0" fill="none" />}
      {deco === 'gold' && <path d="M1 11V15H5M11 1H15V5" stroke="#ecd414" fill="none" />}
      {deco === 'brush' && (
        <>
          <path d="M7 7L11 9L11 11L9 11Z" stroke={K} fill="#fff" />
          <path d="M10 10L12 12" stroke={M} strokeWidth="3" />
          <path d="M12 12L15 15" stroke="#0a1480" strokeWidth="3" />
        </>
      )}
      {deco === 'doc' && (
        <>
          <path d="M8 7H13L15 9V15H8Z" stroke={K} fill="#fff" />
          <path d="M10 10H12M10 12H14" stroke={K} />
        </>
      )}
      {deco === 'red' && (
        <>
          <path d="M7 7H13L15 9V15H7Z" stroke="#e8141c" fill="#fff" />
          <path d="M9 10H11M9 12H13" stroke="#e8141c" />
        </>
      )}
      {deco === 'pencil' && (
        <>
          <path d="M15 15L19 14L31 27L28 31Z" fill="#e8962c" stroke="#a8601c" />
          <path d="M15 15L19 14L18 18Z" fill="#f4d8b0" />
        </>
      )}
    </svg>
  );
};

const HOT = 'border border-[#c08a3c] bg-gradient-to-b from-[#fbd9a0] to-[#fdb84c]';

// "-" is a divider, a trailing "*" marks a pressed tool
const ToolRow: React.FC<{ items: string[]; divider: string }> = ({ items, divider }) => (
  <>
    {items.map((item, i) => {
      if (item === '-') {
        return (
          <span key={i} className={`flex h-4 shrink-0 justify-center ${divider}`}>
            <span className="w-px bg-[#a9aeb8]" />
          </span>
        );
      }
      const on = item.endsWith('*');
      const name = item.replace('*', '');
      return (
        <button
          key={i}
          aria-label={name}
          className={`flex h-[22px] w-[22px] shrink-0 items-center justify-center ${on ? HOT : ''}`}
        >
          <Ico name={name} />
        </button>
      );
    })}
  </>
);

const ToolColumn: React.FC<{ items: string[] }> = ({ items }) => (
  <div className="flex w-[25px] flex-col border-r-2 border-[#a9aeb8] bg-gradient-to-r from-[#eef2fa] to-[#cfd4de]">
    <div className="flex h-[10px] items-center justify-center gap-[2px]">
      <span className="size-[2px] bg-[#a0a5b0]" />
      <span className="size-[2px] bg-[#a0a5b0]" />
      <span className="size-[2px] bg-[#a0a5b0]" />
      <span className="size-[2px] bg-[#a0a5b0]" />
    </div>
    {items.map((item, i) => {
      if (item === '-') {
        return (
          <span key={i} className="flex h-2 items-center justify-center">
            <span className="h-[2px] w-[14px] border-b border-white bg-[#a9aeb8]" />
          </span>
        );
      }
      const [name, deco] = item.split(':');
      return (
        <button key={i} aria-label={name} className="flex h-[21px] items-center justify-center">
          <Ico name={name} deco={deco} />
        </button>
      );
    })}
    <div className="flex h-3 items-center justify-end rounded-b bg-[#b4b9c3] pr-1">
      <svg width="7" height="7" viewBox="0 0 7 7" aria-hidden="true">
        <path d="M1 0V7" stroke="#fff" />
        <path d="M3 0L7 3L3 7Z" fill="#777c88" />
      </svg>
    </div>
  </div>
);

const Caret: React.FC = () => (
  <svg width="7" height="4" viewBox="0 0 7 4" className="inline-block shrink-0" aria-hidden="true">
    <path d="M0 0H7L3.5 4Z" fill="#7a7e86" />
  </svg>
);

const Group: React.FC<{ title: string; width: string; children: React.ReactNode }> = ({ title, width, children }) => (
  <section
    className={`flex shrink-0 flex-col overflow-hidden rounded-[3px] border border-[#a3a7ae] border-b-[#85888e] ${width}`}
  >
    <div className="flex flex-1 pt-px">{children}</div>
    <h2 className="flex h-[15px] items-center justify-center bg-gradient-to-b from-[#e8ebf5] to-[#cdd1da] text-[11px] whitespace-nowrap text-[#4b4f58]">
      {title}
    </h2>
  </section>
);

type BigButtonProps = { icon: string; width: string; lines: string[]; caret?: 'line' | 'below'; dim?: boolean; deco?: string; mark?: string };

const BigButton: React.FC<BigButtonProps> = ({ icon, width, lines, caret, dim, deco, mark }) => (
  <button
    className={`relative flex shrink-0 flex-col items-center pt-1 text-[11px] leading-[13px] whitespace-nowrap ${width} ${
      dim ? 'text-[#8d929a]' : 'text-[#43474f]'
    }`}
  >
    <Ico name={icon} big deco={deco} />
    {mark && <span className="absolute top-1 right-0 text-xs">{mark}</span>}
    <span className="h-[3px]" />
    {lines.map((line, i) => (
      <span key={line}>
        {line}
        {caret === 'line' && i === lines.length - 1 && (
          <span className="pl-[3px]">
            <Caret />
          </span>
        )}
      </span>
    ))}
    {caret === 'below' && (
      <span className="flex pt-1">
        <Caret />
      </span>
    )}
  </button>
);

const SmallCol: React.FC<{ items: string[]; width: string }> = ({ items, width }) => (
  <div className={`flex shrink-0 flex-col items-center ${width}`}>
    {items.map((item) => {
      const on = item.endsWith('*');
      const drop = item.endsWith('+');
      const name = item.replace(/[*+]/, '');
      return (
        <button
          key={item}
          aria-label={name}
          className={`flex h-[22px] items-center justify-center ${on ? `w-[26px] ${HOT}` : 'w-[22px]'}`}
        >
          <Ico name={name} />
          {drop && <Caret />}
        </button>
      );
    })}
  </div>
);

const Rule: React.FC = () => (
  <span className="flex w-1 shrink-0 justify-center py-2">
    <span className="w-px bg-[#c0c4cb]" />
  </span>
);

const QUICK = [
  'home', 'page', 'open', 'save', 'saveAll', 'undo', 'redo', 'undoBox', '-',
  'layers*', 'orthoFree', 'perp', 'parallel', 'corner', '-',
  'gridLock', 'polyLock*', 'snapLock*', 'snapNear*', 'snapMid', '-',
  'updown*', 'as', 'bolt',
];

const BAR_ONE = [
  'zoomWin', 'zoomExt', '-', 'ruler', 'brush', 'tag', '-', 'compass', 'cone', '-',
  'move', 'moveGrey', 'rotate', 'rotCopy', 'mirror', 'align', 'array', '-',
  'trim', 'extend', 'offset', 'stairs', 'burst', 'burstX', 'join', 'fillet', 'chamfer', 'stretch', 'explode', '-',
  'dims', 'book', 'hash', '-',
  'image', 'letterA', 'poly', 'arc', 'circle', 'cloudRect', 'hatchTri', 'spline', 'level', 'query', 'area', 'angle', 'mm', '-',
  'kot', 'eye', '-', 'pages', 'sheet', '-', 'axes', 'axesGrid', '-', 'xy', 'zed', 'p3', 'target',
];

const BAR_TWO = ['slab', 'stair', 'dome', 'found', 'ell', 'dshape', 'chart', 'chartP', 'chartQ', 'chartG', 'bolt', '-', 'frameRed*', 'frame'];

const LEFT = [
  'list', '-', 'pick', 'pickG', 'pickUp', 'pickPlus', 'pickGrid', '-', 'query', '-', 'note', '-',
  'levels', 'copy', 'paste', 'clone', 'clone2', 'clone3', 'ring', '-',
  'cut', 'cut2', 'roof', 'cut3', 'pipe', '-', 'shapes', '-', 'auto', '-', 'bino',
];

const RIGHT_A = [
  'box', 'nodes:brush', 'wallP:brush', 'colRed:brush', 'beamP:brush', 'blockL:brush', 'blockG:brush', 'tableN',
  'pad:brush', 'padTop:brush', 'pads:brush', 'plus', 'wallR:brush', 'wallL:brush', 'stairs2:brush', 'pile:brush',
  'arch:brush', 'truss', 'doc2', 'kot', 'poz2',
];

const RIGHT_B = [
  'hatchB:cyan', 'calc:cyan', 'blockL:cyan', 'blockG:cyan', '-', 'load:cyan', 'col:cyan', 'cap', 'plank:cyan', 'portal:cyan', '-',
  'pad:cyan', 'padTop:cyan', 'pads:cyan', 'steelM:cyan', '-', 'wallK:cyan', 'ellK:cyan', 'hatchB:cyan', 'pile:cyan', 'arch:cyan', '-',
  'curve', 'checks',
];

const RIGHT_C = [
  'steelA:gold', 'steelB:gold', 'steelC:gold', 'steelD:gold', 'steelE:gold', 'steelF:gold', 'steelG:gold', 'steelH:gold',
  'steelI:gold', 'steelJ:gold', 'steelK:gold', 'steelL:gold', 'steelM:gold', 'steelN:gold',
];

const RIGHT_D = [
  'docs:doc', '-', 'task:doc', 'task:doc', 'task:doc', 'wallO:doc', 'spectrum', '-',
  'load:doc', 'blockL:doc', 'blockG:doc', 'col:doc', 'tube:doc', 'cube:doc', 'load:doc', 'pad:doc', 'pads:doc', 'rect:doc', 'rect:doc', 'portalT:doc', '-',
  'yWall:red', 'dome:red', 'wallR:doc', 'wallL:doc', '-', 'redArr:doc', 'redOne:doc', 'bars:doc', '-', 'chart:doc', '-',
  'docs:red', 'padTop:red', 'plus:red',
];

const RIGHT_E = [
  'scale:doc', 'linesH:doc', 'bolt2:doc', 'steelA:doc', 'rail:doc', 'redHash:doc', 'blueHash:doc', 'bowtie:doc', 'frameB:doc',
  'frameR:doc', 'steelO:doc', 'steelF:doc', 'steelP:doc', 'greyBox:doc',
];

const TABS: [string, string][] = [
  ['Betonarme', 'w-[84px]'],
  ['Çelik', 'w-[54px]'],
  ['Birleşim', 'w-[66px]'],
  ['Objeler', 'w-[67px]'],
  ['Değiştir', 'w-[68px]'],
  ['Araçlar', 'w-[66px]'],
  ['Ayarlar', 'w-[62px]'],
  ['Görüntü', 'w-[74px]'],
  ['Analiz ve Tasarım', 'w-[118px]'],
  ['Analiz ve Tasarım Görüntüleme', 'w-[191px]'],
  ['Raporlar', 'w-[76px]'],
];

const TitleBar: React.FC = () => (
  <header className="flex h-6 items-center bg-white">
    <div className="flex h-[22px] items-center rounded-r-full border border-[#c3c8d0] bg-gradient-to-b from-[#f2f4f8] to-[#d5d9e1] pr-2 pl-[47px]">
      <ToolRow items={QUICK} divider="w-[5px]" />
      <button aria-label="Daha fazla" className="ml-px flex">
        <Caret />
      </button>
    </div>
    <div className="ml-2 flex flex-col items-center gap-px">
      <span className="h-px w-[5px] bg-[#555]" />
      <Caret />
    </div>
    <h1 className="flex-1 pl-[42px] text-center text-[11px] whitespace-nowrap text-black">
      ideCAD Statik - NURGÜL AKIN - [ÇATI KATI TAVANI, 10.20 KOTU]
    </h1>
    <div className="flex items-center pr-[2px] text-black">
      <button aria-label="Küçült" className="flex w-[46px] justify-center">
        <Minus className="h-3 w-3" strokeWidth={2} />
      </button>
      <button aria-label="Önceki boyut" className="flex w-[46px] justify-center">
        <Copy className="h-3 w-3 -scale-x-100" strokeWidth={2} />
      </button>
      <button aria-label="Kapat" className="flex w-[46px] justify-center">
        <X className="h-4 w-4" strokeWidth={1.5} />
      </button>
    </div>
  </header>
);

const TabRow: React.FC = () => (
  <nav className="flex h-[21px] items-end pl-[47px] text-[11px] text-[#565b65]">
    {TABS.map(([name, width]) => (
      <button key={name} className={`h-full shrink-0 pt-[2px] whitespace-nowrap ${width}`}>
        {name}
      </button>
    ))}
    <button className="h-full w-16 shrink-0 rounded-t border border-b-0 border-[#9fc3c8] bg-gradient-to-b from-[#c9dfe4] to-[#e8f5f7] pt-px">
      Çizimler
    </button>
    <div className="flex-1" />
    <label className="flex h-full w-[215px] items-center border border-[#a9aeb8] bg-[#eceef0]">
      <span className="flex h-full flex-1 items-center gap-1 bg-white pl-1">
        <Search className="h-[10px] w-[10px] text-[#888]" />
        <input
          type="text"
          aria-label="Komut ara"
          placeholder="Herhangi bir komut ara..."
          className="w-full bg-transparent italic outline-none placeholder:text-[#8c8c8c]"
        />
      </span>
      <span className="flex w-4 justify-center">
        <Caret />
      </span>
    </label>
    <div className="flex h-full items-center gap-2 px-[7px]">
      <Ico name="layerA" />
      <Ico name="layerA" />
    </div>
    <div className="flex h-full w-[134px] items-center border border-[#a9aeb8] bg-[#e9eaec] text-black">
      <svg width="28" height="14" viewBox="0 0 28 14" className="ml-[2px]" aria-hidden="true">
        <path d="M1 2H10V11H1Z" fill="#fff" stroke="#111" strokeWidth="2" />
        <path d="M2 3L9 10M9 3L2 10" stroke="#111" strokeWidth="2" />
        <path d="M15 5H23V12H15ZM20 5V1H25V5" fill="none" stroke="#334" />
      </svg>
      <select aria-label="Katman" className="h-full flex-1 appearance-none bg-transparent pl-1 outline-none">
        <option>Standart</option>
      </select>
      <span className="flex pr-1">
        <Caret />
      </span>
    </div>
    <div className="flex h-full items-center">
      <button className="flex w-[74px] items-center gap-3 pl-1 text-[#565b65]">
        Görünüm <Caret />
      </button>
      <Ico name="wrench" />
      <span className="mx-[5px] h-3 w-px bg-[#a9aeb8]" />
      <Ico name="help" />
      <span className="flex w-5 justify-center">
        <Caret />
      </span>
      <Minus className="mx-1 mt-2 h-[10px] w-[10px] text-[#777]" strokeWidth={3} />
      <Copy className="mx-[3px] h-[10px] w-[10px] text-[#777]" strokeWidth={3} />
      <X className="mr-[3px] ml-1 h-[13px] w-[13px] text-[#777]" strokeWidth={3} />
    </div>
  </nav>
);

const Ribbon: React.FC = () => (
  <div className="mr-1 flex h-[92px] gap-1 rounded-b border-b border-[#9ea3ac] bg-gradient-to-b from-[#dceef1] via-[#f3f6f6] via-20% to-white pt-[3px] pb-[2px] pl-1">
    <Group title="Pencere" width="w-[150px]">
      <BigButton icon="winSwap" width="w-[51px]" lines={['Pencere', 'Değiştir']} />
      <Rule />
      <BigButton icon="kat" width="w-[46px]" lines={['Kat', 'listesi']} caret="line" />
      <BigButton icon="cizim" width="w-[46px]" lines={['Çizim', 'Listesi']} caret="line" />
    </Group>
    <Group title="Çizim Oluştur" width="w-[176px]">
      <BigButton icon="beton" width="w-[62px]" lines={['Betonarme']} caret="below" deco="pencil" />
      <BigButton icon="celik" width="w-[38px]" lines={['Çelik']} caret="below" deco="pencil" />
      <BigButton icon="kalip" width="w-[74px]" lines={['Kalıp İskelesi', 'Çizimleri']} deco="pencil" />
    </Group>
    <Group title="İlkel Objeler" width="w-[205px]">
      <BigButton icon="zigzag" width="w-[46px]" lines={['Sürekli', 'Çizgi']} caret="line" />
      <SmallCol width="w-[20px]" items={['level', 'circleR', 'arc']} />
      <SmallCol width="w-[34px]" items={['cloudRect', 'hatchTri', 'circle+']} />
      <SmallCol width="w-[36px]" items={['spline+', 'zig', 'image']} />
      <BigButton icon="kutup" width="w-[66px]" lines={['Kütüphane']} caret="below" />
    </Group>
    <Group title="Değiştir" width="w-[315px]">
      <SmallCol width="w-[29px]" items={['compass', 'cone', 'moveGrey']} />
      <Rule />
      <SmallCol width="w-[31px]" items={['ruler', 'brush', 'tag']} />
      <Rule />
      <BigButton icon="tasi" width="w-[46px]" lines={['Taşı']} />
      <SmallCol width="w-[24px]" items={['rotate', 'mirror', 'rotCopy']} />
      <Rule />
      <SmallCol width="w-[36px]" items={['stairs+', 'align', 'array']} />
      <SmallCol width="w-[27px]" items={['trim', 'fillet', 'stretch']} />
      <SmallCol width="w-[27px]" items={['extend', 'chamfer', 'explode']} />
      <Rule />
      <BigButton icon="ofset" width="w-[50px]" lines={['Ofset']} />
      <SmallCol width="w-[20px]" items={['burst', 'burstX', 'join']} />
    </Group>
    <Group title="Düzenle" width="w-[169px]">
      <BigButton icon="klonla" width="w-[46px]" lines={['Klonla']} />
      <SmallCol width="w-[24px]" items={['copy', 'paste', 'levels']} />
      <Rule />
      <SmallCol width="w-[28px]" items={['clone2', 'clone3', 'ring']} />
      <Rule />
      <SmallCol width="w-[32px]" items={['pick', 'pickG', 'pickUp']} />
      <SmallCol width="w-[24px]" items={['pickPlus', 'pickGrid', 'pen']} />
    </Group>
    <Group title="Yakalama" width="w-[134px]">
      <SmallCol width="w-[29px]" items={['axes', 'axesGrid', 'orthoFree']} />
      <Rule />
      <SmallCol width="w-[32px]" items={['gridLock', 'snapLock*', 'polyLock*']} />
      <Rule />
      <SmallCol width="w-[28px]" items={['perp', 'parallel', 'corner']} />
      <Rule />
      <SmallCol width="w-[30px]" items={['tangent', 'snapNear*', 'snapMid']} />
    </Group>
    <Group title="Referans" width="w-[76px]">
      <BigButton icon="uzaklik" width="w-[46px]" lines={['Uzaklık']} />
      <SmallCol width="w-[22px]" items={['area', 'angle', 'mm']} />
    </Group>
    <Group title="Ölçüler" width="w-[185px]">
      <BigButton icon="serbest" width="w-[46px]" lines={['Serbest', 'Ölçü']} />
      <SmallCol width="w-[22px]" items={['dimShape', 'dimShape2', 'dimWave']} />
      <BigButton icon="kot2" width="w-[46px]" lines={['Kot']} mark="1.2" />
      <BigButton icon="kesitKot" width="w-[42px]" lines={['Kesit', 'Kot']} mark="1.2" dim />
      <SmallCol width="w-[24px]" items={['redAngle', 'redR', 'abcLine']} />
    </Group>
    <Group title="Donatı" width="w-[91px]">
      <BigButton icon="ciroz" width="w-[46px]" lines={['Çiroz']} />
      <BigButton icon="etriye" width="w-[40px]" lines={['Etriye']} />
    </Group>
    <Group title="Tarama" width="w-[84px]">
      <BigButton icon="tarama" width="w-[54px]" lines={['Tanımlı', 'Tarama']} caret="line" />
      <SmallCol width="w-[22px]" items={['hash', 'fill2', 'fillRing']} />
    </Group>
    <Group title="Yazılar" width="w-[76px]">
      <BigButton icon="yazi" width="w-[46px]" lines={['Yazılar']} caret="below" />
      <SmallCol width="w-[22px]" items={['cols', 'abcOpen', 'abcInv']} />
    </Group>
    <Group title="Pafta Dizaynı" width="w-[72px]">
      <BigButton icon="pafta" width="w-[70px]" lines={['Yeni Pafta', 'Oluştur']} caret="line" />
    </Group>
    <Group title="Araçlar" width="w-[214px]">
      <BigButton icon="kesitH" width="w-[46px]" lines={['Kesit', 'Hattı']} caret="line" />
      <Rule />
      <div className="flex flex-col pl-[5px] text-[11px] text-[#43474f]">
        <button className="flex h-[22px] items-center gap-1 whitespace-nowrap"><Ico name="cog" />Donatı Poz Ayarları</button>
        <button className="flex h-[22px] items-center gap-1 whitespace-nowrap"><Ico name="poz" />Çelik Pozlandırma Ayarları</button>
        <button className="flex h-[22px] items-center gap-1 whitespace-nowrap"><Ico name="poz2" />Çelik Pozlandırması yap</button>
      </div>
    </Group>
  </div>
);

const BarEnd: React.FC = () => (
  <span className="ml-[3px] flex h-full w-[10px] items-end justify-center rounded-r bg-[#aeb3be] pb-1">
    <Caret />
  </span>
);

const Grip: React.FC = () => (
  <span className="flex w-2 flex-col items-center gap-[2px]">
    <span className="size-[2px] bg-[#a0a5b0]" />
    <span className="size-[2px] bg-[#a0a5b0]" />
    <span className="size-[2px] bg-[#a0a5b0]" />
    <span className="size-[2px] bg-[#a0a5b0]" />
  </span>
);

const ToolBars: React.FC = () => (
  <div className="flex h-[26px] items-start pt-px">
    <div className="flex h-6 items-center border-b border-[#a9aeb8] bg-gradient-to-b from-[#eef2fa] to-[#cfd4de] pl-px">
      <Grip />
      <ToolRow items={BAR_ONE} divider="w-2" />
      <BarEnd />
    </div>
    <div className="flex h-6 items-center border-b border-[#a9aeb8] bg-gradient-to-b from-[#eef2fa] to-[#cfd4de] pl-px">
      <Grip />
      <ToolRow items={BAR_TWO} divider="w-2" />
      <BarEnd />
    </div>
  </div>
);

const NAVY = '#2a2f8c';
const GREEN = '#148214';

// arrow head with its tip at x, y
const Head: React.FC<{ x: number; y: number; turn: number; color: string }> = ({ x, y, turn, color }) => (
  <path d="M0 0L11 -4V4Z" transform={`translate(${x} ${y}) rotate(${turn})`} fill="none" stroke={color} />
);

const DimH: React.FC<{ x1: number; x2: number; y: number; a: number; b: number }> = ({ x1, x2, y, a, b }) => (
  <g stroke={NAVY}>
    <path
      d={`M${x1} ${y}H${a}M${b} ${y}H${x2}M${a} ${y - 16}V${y + 16}M${b} ${y - 16}V${y + 16}`}
      shapeRendering="crispEdges"
    />
    <Head x={x1} y={y} turn={0} color={NAVY} />
    <Head x={x2} y={y} turn={180} color={NAVY} />
  </g>
);

const DimV: React.FC<{ y1: number; y2: number; x: number; a: number; b: number }> = ({ y1, y2, x, a, b }) => (
  <g stroke={GREEN}>
    <path
      d={`M${x} ${y1}V${a}M${x} ${b}V${y2}M${x - 16} ${a}H${x + 16}M${x - 16} ${b}H${x + 16}`}
      shapeRendering="crispEdges"
    />
    <Head x={x} y={y1} turn={90} color={GREEN} />
    <Head x={x} y={y2} turn={-90} color={GREEN} />
  </g>
);

type SlabProps = { id: string; x: number; y: number; lx: number };

const SlabTag: React.FC<SlabProps> = ({ id, x, y, lx }) => (
  <g>
    <circle cx={x} cy={y} r={29} fill="none" stroke="#2b8068" />
    <path d={`M${x - 29} ${y}H${x + 29}`} stroke="#2b8068" />
    <g fontSize={19}>
      <text x={x - 18} y={y - 4} fill="#0a0a50">{id}</text>
      <text x={x - 23} y={y + 18} fill={NAVY}>d=15</text>
    </g>
    <g fontSize={27} fill={NAVY}>
      <text x={lx} y={y - 4}>G=0.524 tf/m²</text>
      <text x={lx} y={y + 24}>Q=0.2 tf/m²</text>
    </g>
  </g>
);

const GRID_X = [155, 384, 841, 1069, 1298, 1526, 1755, 1984, 2212, 2441];
const GRID_Y = [323, 551, 780, 1009, 1237];

const Plan: React.FC = () => (
  <svg
    className="absolute inset-0 h-full w-full"
    fontFamily="'Liberation Sans', Arial, sans-serif"
    shapeRendering="crispEdges"
    role="img"
    aria-label="Kat planı"
  >
    <defs>
      <pattern id="hatch" width="6" height="6" patternUnits="userSpaceOnUse">
        <rect width="6" height="6" fill="#fbfbfb" />
        <path d="M0 6L6 0" stroke="#d0d0d0" />
        <path d="M0 3L3 0M3 6L6 3" stroke="#e8e8e8" />
      </pattern>
      <pattern id="columnHatch" width="8" height="8" patternUnits="userSpaceOnUse">
        <rect width="8" height="8" fill="#a09dc8" />
        <path d="M0 8L8 0" stroke="#b0aec0" />
      </pattern>
    </defs>
    <g transform="translate(-51 -164)">
      <g stroke="#dadae8">
        {GRID_X.map((x) => (
          <path key={x} d={`M${x} 160V1320`} />
        ))}
        {GRID_Y.map((y) => (
          <path key={y} d={`M50 ${y}H2460`} />
        ))}
      </g>
      <path d="M612 160V1320" stroke="#9a9aa2" />
      <path d="M886 160V365M910 160V365M886 1134V1320M910 1134V1320M1835 160V1320M1858 160V1320" stroke="#ece2da" />
      <path d="M944 160V365M972 160V365M944 1134V1320M978 1134V1320M1341 160V365M1369 160V365M1339 1134V1320M1372 1134V1320M1766 1070V1320M1801 160V1320M1772 160V430" stroke="#dccdc4" />
      <path d="M1433 424H1770M1433 452H1770M1433 1041H1770M1433 1070H1770M1767 425H1801V492H1767ZM1767 1007H1801V1076H1767Z" stroke="#dccdc4" fill="none" />

      {/* axes */}
      <g stroke="#4a4a4a" strokeDasharray="84 14 14 14">
        <path d="M319 435H2460M319 1064H2460" />
        <path d="M955 163V407M1355 163V407M1789 163V1320" strokeDashoffset={70} />
        <path d="M955 1129V1320M1355 1129V1320" />
      </g>
      <path d="M269 435H305M269 1064H305" stroke="#4a4a4a" />
      <g fill="#fff" stroke="#f58220" shapeRendering="auto">
        <circle cx={249} cy={435} r={19} />
        <circle cx={249} cy={1064} r={19} />
      </g>
      <g fontSize={38} textAnchor="middle" fill="#151515">
        <text x={249} y={448}>2</text>
        <text x={249} y={1077}>3</text>
      </g>

      {/* slabs */}
      <path d="M885 366H1431V1133H885Z" fill="#e9f1f7" />
      <path d="M955 366V407M1355 366V420M955 1096V1115M1355 1077V1085M1355 1096V1115M887 1064H905M919 1064H933M1383 1064H1402M1382 435H1409" stroke="#4a4a4a" />
      <path d="M915 387L947 408" stroke={NAVY} />
      <g shapeRendering="auto">
        <SlabTag id="D08" x={975} y={414} lx={1008} />
        <SlabTag id="D09" x={934} y={432} lx={967} />
        <SlabTag id="D06" x={1025} y={500} lx={1058} />
        <SlabTag id="D10" x={1425} y={460} lx={1458} />
        <SlabTag id="D11" x={1025} y={1117} lx={1058} />
      </g>
      <g stroke={GREEN} strokeWidth={3}>
        <path d="M928 396H1400M973 748H1338M887 748H942M1372 748H1428M935 1101H1397" />
      </g>
      <g stroke={NAVY} strokeWidth={3}>
        <path d="M916 387V1112M1159 453V1041M1178 366V421M1159 1071V1132M1398 395V1098" />
      </g>
      <path d="M945 407H1171M1187 407H1400M1171 397V421M1187 397V421" stroke={NAVY} />
      <g shapeRendering="auto">
        <DimH x1={973} x2={1338} y={865} a={1151} b={1167} />
        <DimH x1={887} x2={942} y={895} a={907} b={923} />
        <DimH x1={1367} x2={1428} y={889} a={1390} b={1406} />
        <DimH x1={931} x2={1401} y={1114} a={1151} b={1167} />
        <DimV y1={387} y2={1112} x={904} a={740} b={756} />
        <DimV y1={453} y2={1041} x={1082} a={740} b={756} />
        <DimV y1={369} y2={421} x={1070} a={387} b={403} />
        <DimV y1={403} y2={1098} x={1386} a={740} b={756} />
        <DimV y1={1076} y2={1130} x={1072} a={1093} b={1109} />
      </g>

      {/* beams */}
      <g fill="url(#hatch)">
        <path d="M979 424H1338V452H979ZM979 1041H1338V1071H979ZM946 475H972V1024H946ZM1339 492H1366V1007H1339Z" />
      </g>
      <path d="M979 453H1338M979 1041H1338M979 1071H1338M972 475V1024M1339 492V1007M1366 492V1007" stroke="#24105c" />
      <g fill="url(#columnHatch)" stroke="#2c2c88">
        <path d="M943 407H979V475H943ZM1339 422H1379V492H1339ZM943 1024H979V1092H943ZM1339 1007H1378V1077H1339Z" />
      </g>
      <path d="M954 434H957V437H954ZM1354 434H1357V437H1354ZM954 1063H957V1066H954ZM1354 1063H1357V1066H1354Z" stroke="#9a4ad0" fill="none" />
      <g fontSize={23} fill="#333">
        <text x={1001} y={447}>K01 25/50</text>
        <text x={1001} y={1064}>K02 25/50</text>
        <text transform="translate(966 1000) rotate(-90)">K03 25/50</text>
        <text transform="translate(1361 984) rotate(-90)">K04 25/50</text>
      </g>
      <g fontSize={24} fill={NAVY}>
        <text x={1158} y={480}>2</text>
        <text x={1178} y={393}>2</text>
        <text x={1397} y={429}>2</text>
        <text x={1158} y={1097}>2</text>
        <text x={914} y={416}>2</text>
      </g>
      <g fontSize={24} fill={GREEN}>
        <text x={1375} y={394}>1</text>
        <text x={1310} y={748}>1</text>
        <text x={1402} y={749}>1</text>
        <text x={915} y={749}>1</text>
        <text x={1373} y={1099}>1</text>
      </g>
      <g fontSize={19} fill="#1c1c1c">
        <text x={862} y={401}>S01</text>
        <text x={983} y={401}>30/60</text>
        <text x={1256} y={418}>S02</text>
        <text x={1383} y={418}>35/60</text>
        <text x={862} y={1018}>S03</text>
        <text x={983} y={1018}>30/60</text>
        <text x={1256} y={1001}>S04</text>
        <text x={1383} y={1001}>35/60</text>
      </g>

      {/* centre of mass and rigidity */}
      <g shapeRendering="auto">
        <circle cx={1165} cy={748} r={17} fill="none" stroke="#1414c8" />
        <circle cx={1158} cy={748} r={17} fill="none" stroke={NAVY} />
        <path d="M1166 748V731A17 17 0 0 1 1183 748ZM1166 748V765A17 17 0 0 1 1149 748Z" fill="#f01018" />
        <path d="M1141 748H1186M1165 730V766" stroke={NAVY} />
        <text x={1181} y={740} fontSize={11} fill="#111">M(ÇATIKATI)</text>
        <text x={1184} y={765} fontSize={11} fill="#f01018">RM(ÇATIKATI)</text>
      </g>

      {/* markup */}
      <g fill="none" stroke="#ee1c24" strokeWidth={5} strokeLinecap="round" shapeRendering="auto">
        <path d="M885 362V1131M885 366H1020L1430 367V940L1428 1134L885 1131" />
        <path d="M885 366L953 424L1378 422L1430 368" />
        <path d="M944 416V925L942 1095L887 1131" />
        <path d="M1380 423V530L1377 1077L1429 1132" />
        <path d="M947 1072L1378 1077" />
        <path d="M1544 410H1552M1482 1139H1483" />
      </g>
      <g fill="none" stroke="#3f48cc" strokeWidth={5} shapeRendering="auto">
        <ellipse cx={904} cy={395} rx={85} ry={65} />
        <ellipse cx={1383} cy={396} rx={94} ry={79} />
        <ellipse cx={923} cy={1099} rx={84} ry={68} />
        <ellipse cx={1388} cy={1090} rx={111} ry={90} />
      </g>
      <g fontSize={37} fontWeight={700} fill="#ee2a34" shapeRendering="auto">
        <text x={1854} y={523}>Döşeme kenarları köşelerde</text>
        <text x={1854} y={565}>çapraz şekilde kesilmelidir.</text>
        <text x={1854} y={606}>Konsol döşemelerin</text>
        <text x={1854} y={648}>tanımlanması bu şekilde</text>
        <text x={1854} y={690}>yapılmalıdır.</text>
      </g>
    </g>
  </svg>
);

const Field: React.FC<{ name: string; value: string; off?: boolean }> = ({ name, value, off }) => (
  <input
    type="text"
    aria-label={name}
    defaultValue={value}
    className={`h-[19px] w-[63px] border-b border-[#777] pl-1 text-[11px] outline-none ${off ? 'bg-[#ececec]' : 'bg-white'}`}
  />
);

const AxisCheck: React.FC<{ name: string }> = ({ name }) => (
  <label className="flex w-[30px] items-center">
    <input type="checkbox" className="size-3 appearance-none rounded-[2px] border border-[#555] bg-white" />
    {name}
  </label>
);

const CoordBox: React.FC = () => (
  <div className="absolute top-[26px] right-[6px] w-[192px] border-2 border-[#e8ecf4] border-r-[#9298a4] border-b-[#9298a4] bg-[#efefef] p-px pb-[3px] text-[11px] text-[#222]">
    <div className="flex h-[23px] items-center justify-between bg-[#b7bfca] px-1 text-[#44474e]">
      <h3 className="font-bold">Koordinat Kutusu</h3>
      <button aria-label="Kutuyu kapat">
        <X className="h-3 w-3" strokeWidth={1.5} />
      </button>
    </div>
    <div className="flex flex-col gap-[2px] px-[2px]">
      <div className="flex items-center">
        <AxisCheck name="X" />
        <Field name="X" value="877.21 cm" />
        <span className="w-[27px] pl-[6px]">L</span>
        <Field name="L" value="537.28 cm" />
      </div>
      <div className="flex items-center">
        <AxisCheck name="Y" />
        <Field name="Y" value="900.1 cm" />
        <span className="w-[27px] pl-[6px]">A</span>
        <Field name="A" value="225.920" />
      </div>
      <div className="flex items-center">
        <AxisCheck name="Z" />
        <Field name="Z" value="1020 cm" off />
      </div>
    </div>
  </div>
);

const StatusBar: React.FC = () => (
  <footer className="flex h-[19px] items-stretch border-t-2 border-[#a4a8b0] bg-gradient-to-b from-[#e2e4ea] via-[#a5abb3] via-55% to-[#b9bfc7] text-[11px] leading-[17px] text-[#26282c]">
    <span className="w-[258px] pl-[6px]">BOŞ</span>
    <span className="flex-1 border-l border-[#85898f] pl-[3px]">Hazır</span>
    <span className="w-[77px] border-l border-[#85898f] pl-1">tf / m</span>
    <span className="w-[76px] border-l border-[#85898f] pl-2">1 : 100</span>
    <span className="w-[76px] border-l border-[#85898f] pl-2">% 149</span>
  </footer>
);

const TaskBar: React.FC = () => (
  <nav className="flex h-12 items-center border-t border-[#a9adb6] bg-gradient-to-r from-[#dbdbe2] via-[#d8dae8] to-[#dcdade] text-xs">
    <div className="flex flex-1 items-center gap-2 pl-[17px] leading-4">
      <svg width="26" height="26" viewBox="0 0 26 26" aria-hidden="true">
        <path d="M14 3C22 6 25 14 21 22C12 26 5 21 4 16C13 18 17 12 14 3Z" fill="#f5a31c" />
        <path d="M2 10C0 8 3 5 4 5C5 0 11 1 11 5C15 5 15 10 12 10Z" fill="#8fb3ea" />
        <path d="M12 23C9 22 10 18 13 18C14 13 20 14 20 18C25 18 25 23 22 23Z" fill="#a8c4f2" />
      </svg>
      <div className="text-[11px]">
        <p className="text-[#1b1b1b]">21°C</p>
        <p className="text-[#606068]">Parçalı bulutlu</p>
      </div>
    </div>
    <div className="flex items-center">
      <button aria-label="Başlat" className="flex w-[50px] justify-center">
        <svg width="24" height="24" viewBox="0 0 24 24" aria-hidden="true">
          <path d="M0 0H11V11H0ZM13 0H24V11H13ZM0 13H11V24H0ZM13 13H24V24H13Z" fill="#1288dc" />
        </svg>
      </button>
      <label className="flex h-8 w-[220px] items-center gap-2 rounded-full border border-[#c4c6d2] bg-[#f4f5f9] px-3">
        <Search className="h-[15px] w-[15px] shrink-0 text-[#222]" strokeWidth={2} />
        <input type="text" aria-label="Ara" placeholder="Ara" className="w-full bg-transparent outline-none placeholder:text-[#666]" />
        <svg width="20" height="20" viewBox="0 0 20 20" className="-mr-2 shrink-0" aria-hidden="true">
          <path d="M2 19V10A8 8 0 1 1 10 18Z" fill="#eef8fd" stroke="#1a80dc" strokeWidth="2" />
          <path d="M8 5V14L13 11L9 9" fill="none" stroke="#1a6ae0" strokeWidth="2" />
        </svg>
      </label>
      <button aria-label="Görev görünümü" className="flex w-11 justify-center">
        <svg width="24" height="24" viewBox="0 0 24 24" aria-hidden="true">
          <path d="M1 6H19V22H1Z" fill="#2c2c2c" />
          <path d="M8 2H24V17H8Z" fill="#f8f8f8" />
          <path d="M8 6H19V17H8Z" fill="#c2c2c2" />
        </svg>
      </button>
      <button aria-label="Sohbet" className="flex w-11 justify-center">
        <svg width="24" height="24" viewBox="0 0 24 24" aria-hidden="true">
          <path d="M12 1A11 11 0 1 1 7 22L2 23V17A11 11 0 0 1 12 1Z" fill="#6264c8" />
          <path d="M6 8H14V16H6ZM15 11L18 8V16L15 13Z" fill="#fff" />
        </svg>
      </button>
      <button aria-label="Dosya Gezgini" className="flex w-11 justify-center">
        <svg width="26" height="24" viewBox="0 0 26 24" aria-hidden="true">
          <path d="M1 2H10L13 5H25V22H1Z" fill="#e8a81c" />
          <path d="M1 7H25V22H1Z" fill="#ffd04c" />
          <path d="M6 15H20V22H6Z" fill="#1580d0" />
          <path d="M10 19H16V22H10Z" fill="#0a4f90" />
        </svg>
      </button>
      <button aria-label="Edge" className="flex w-11 justify-center">
        <svg width="25" height="25" viewBox="0 0 24 24" aria-hidden="true">
          <circle cx="12" cy="12" r="11" fill="#1673c6" />
          <path d="M1 11C2 -1 20 -3 23 10C23 17 14 17 14 14C17 11 12 6 8 8C4 9 2 10 1 11Z" fill="#3ccb98" />
          <path d="M8 11C8 18 14 21 20 18C16 24 7 25 3 18C2 14 4 11 8 11Z" fill="#0c4a94" />
        </svg>
      </button>
      <button aria-label="Store" className="flex w-11 justify-center">
        <svg width="24" height="24" viewBox="0 0 24 24" aria-hidden="true">
          <path d="M8 5V2H16V5" fill="none" stroke="#28a8e8" strokeWidth="2" />
          <path d="M1 5H23V21L21 23H3L1 21Z" fill="#174a80" />
          <path d="M7 9H11V13H7Z" fill="#f04e1f" />
          <path d="M13 9H17V13H13Z" fill="#7eba00" />
          <path d="M7 15H11V19H7Z" fill="#1ca4ee" />
          <path d="M13 15H17V19H13Z" fill="#fdb800" />
        </svg>
      </button>
      <button aria-label="Chrome" className="relative flex w-11 justify-center">
        <svg width="24" height="24" viewBox="0 0 24 24" aria-hidden="true">
          <circle cx="12" cy="12" r="12" fill="#fcc31e" />
          <path d="M12 12L2 6A12 12 0 0 1 22 6H12Z" fill="#e33b2e" />
          <path d="M12 12L12 24A12 12 0 0 1 2 6L7 14Z" fill="#279847" />
          <circle cx="12" cy="12" r="6" fill="#fff" />
          <circle cx="12" cy="12" r="4" fill="#2c6fe8" />
        </svg>
        <span className="absolute -bottom-2 h-[3px] w-[6px] rounded-full bg-[#85868e]" />
      </button>
      <button aria-label="ideCAD" className="relative ml-[2px] flex h-[38px] w-[38px] items-center justify-center rounded bg-[#ececf4]">
        <svg width="22" height="22" viewBox="0 0 22 22" aria-hidden="true">
          <path d="M1 1H6V6H1Z" fill="#e02028" />
          <path d="M1 8H6V21H1ZM8 1H13V21H8ZM15 1H21V6H15ZM15 8H21V13H15ZM15 15H21V21H15Z" fill="#fff" stroke="#8a8a90" />
        </svg>
        <span className="absolute bottom-0 h-[3px] w-4 rounded-full bg-[#0a78d4]" />
      </button>
    </div>
    <div className="flex flex-1 items-center justify-end gap-[14px] pr-[21px] text-[#1c1c1c]">
      <ChevronUp className="mr-[6px] h-[14px] w-[14px]" />
      <Cloud className="mr-1 h-4 w-4" fill="#999" />
      <span className="flex items-center gap-2">
        <Monitor className="h-4 w-4" strokeWidth={1.5} />
        <Volume2 className="h-[17px] w-[17px]" strokeWidth={1.5} />
      </span>
      <span className="text-right text-[11px] leading-4">
        22:47
        <br />
        23.09.2023
      </span>
      <span className="-ml-2 flex size-4 items-center justify-center rounded-full bg-[#0a70cc] text-[10px] text-white">2</span>
    </div>
  </nav>
);

const App: React.FC = () => {
  return (
    <div className="relative flex min-h-screen flex-col bg-[#d0d4dd] font-['Open_Sans','Noto_Sans',sans-serif]">
      <TitleBar />
      <TabRow />
      <button
        aria-label="ideCAD"
        className="absolute top-px left-1 flex size-[38px] items-center justify-center rounded-full border border-[#8b8f96] bg-gradient-to-b from-white via-[#e0e2e6] to-[#b8bcc4] text-[10px] shadow"
      >
        <span className="text-[#444]">ide</span>
        <span className="font-bold text-[#e01c24]">CAD</span>
      </button>
      <Ribbon />
      <ToolBars />

      <div className="flex flex-1 items-stretch">
        {/* left dock */}
        <aside className="flex w-[49px] shrink-0 items-start pl-px">
          <ToolColumn items={LEFT} />
          <button className="mt-1 flex h-[87px] w-[21px] items-center border border-[#a9aeb8] bg-gradient-to-r from-[#fff0b8] to-[#fddb78] pt-[2px] text-xs whitespace-nowrap text-[#6c6a5c] [writing-mode:vertical-rl]">
            Yapı Ağacı
          </button>
        </aside>

        <main className="flex min-w-0 flex-1 flex-col">
          <div className="relative min-h-0 flex-1 overflow-hidden border-2 border-t border-[#a9aeb8] bg-white">
            <Plan />
            <button className="absolute top-px right-0 flex h-4 w-[18px] items-center justify-center border-2 border-[#555] border-t-[#222] bg-[#d4d4d4] text-xs text-black">
              V
            </button>
            <CoordBox />
          </div>
          <div className="mt-1 h-[61px] bg-[#f0f0f0] text-[11px] leading-[13px] font-semibold text-black">
            <p>*İptal*</p>
            <p>Komut :</p>
            <p>*İptal*</p>
            <p>Komut :</p>
          </div>
          <StatusBar />
        </main>

        {/* right dock */}
        <aside className="flex w-[102px] shrink-0 items-start gap-px pl-[2px]">
          <button className="mt-1 flex h-[117px] w-[21px] items-center border border-[#a9aeb8] bg-gradient-to-r from-[#fff0b8] to-[#fddb78] pt-[2px] text-xs whitespace-nowrap text-[#6c6a5c] [writing-mode:vertical-rl]">
            Rapor Önizleme
          </button>
          <ToolColumn items={RIGHT_A} />
          <div className="flex flex-col gap-px">
            <ToolColumn items={RIGHT_B} />
            <ToolColumn items={RIGHT_C} />
          </div>
          <div className="flex flex-col gap-px">
            <ToolColumn items={RIGHT_D} />
            <ToolColumn items={RIGHT_E} />
          </div>
        </aside>
      </div>

      <div className="pointer-events-none absolute right-[114px] bottom-[116px] text-[#b4b4b4]">
        <p className="text-[19px] leading-6">Windows'u Etkinleştir</p>
        <p className="text-sm leading-5">Windows'u etkinleştirmek için Ayarlar'a gidin.</p>
      </div>

      <TaskBar />
    </div>
  );
};

export default App;
